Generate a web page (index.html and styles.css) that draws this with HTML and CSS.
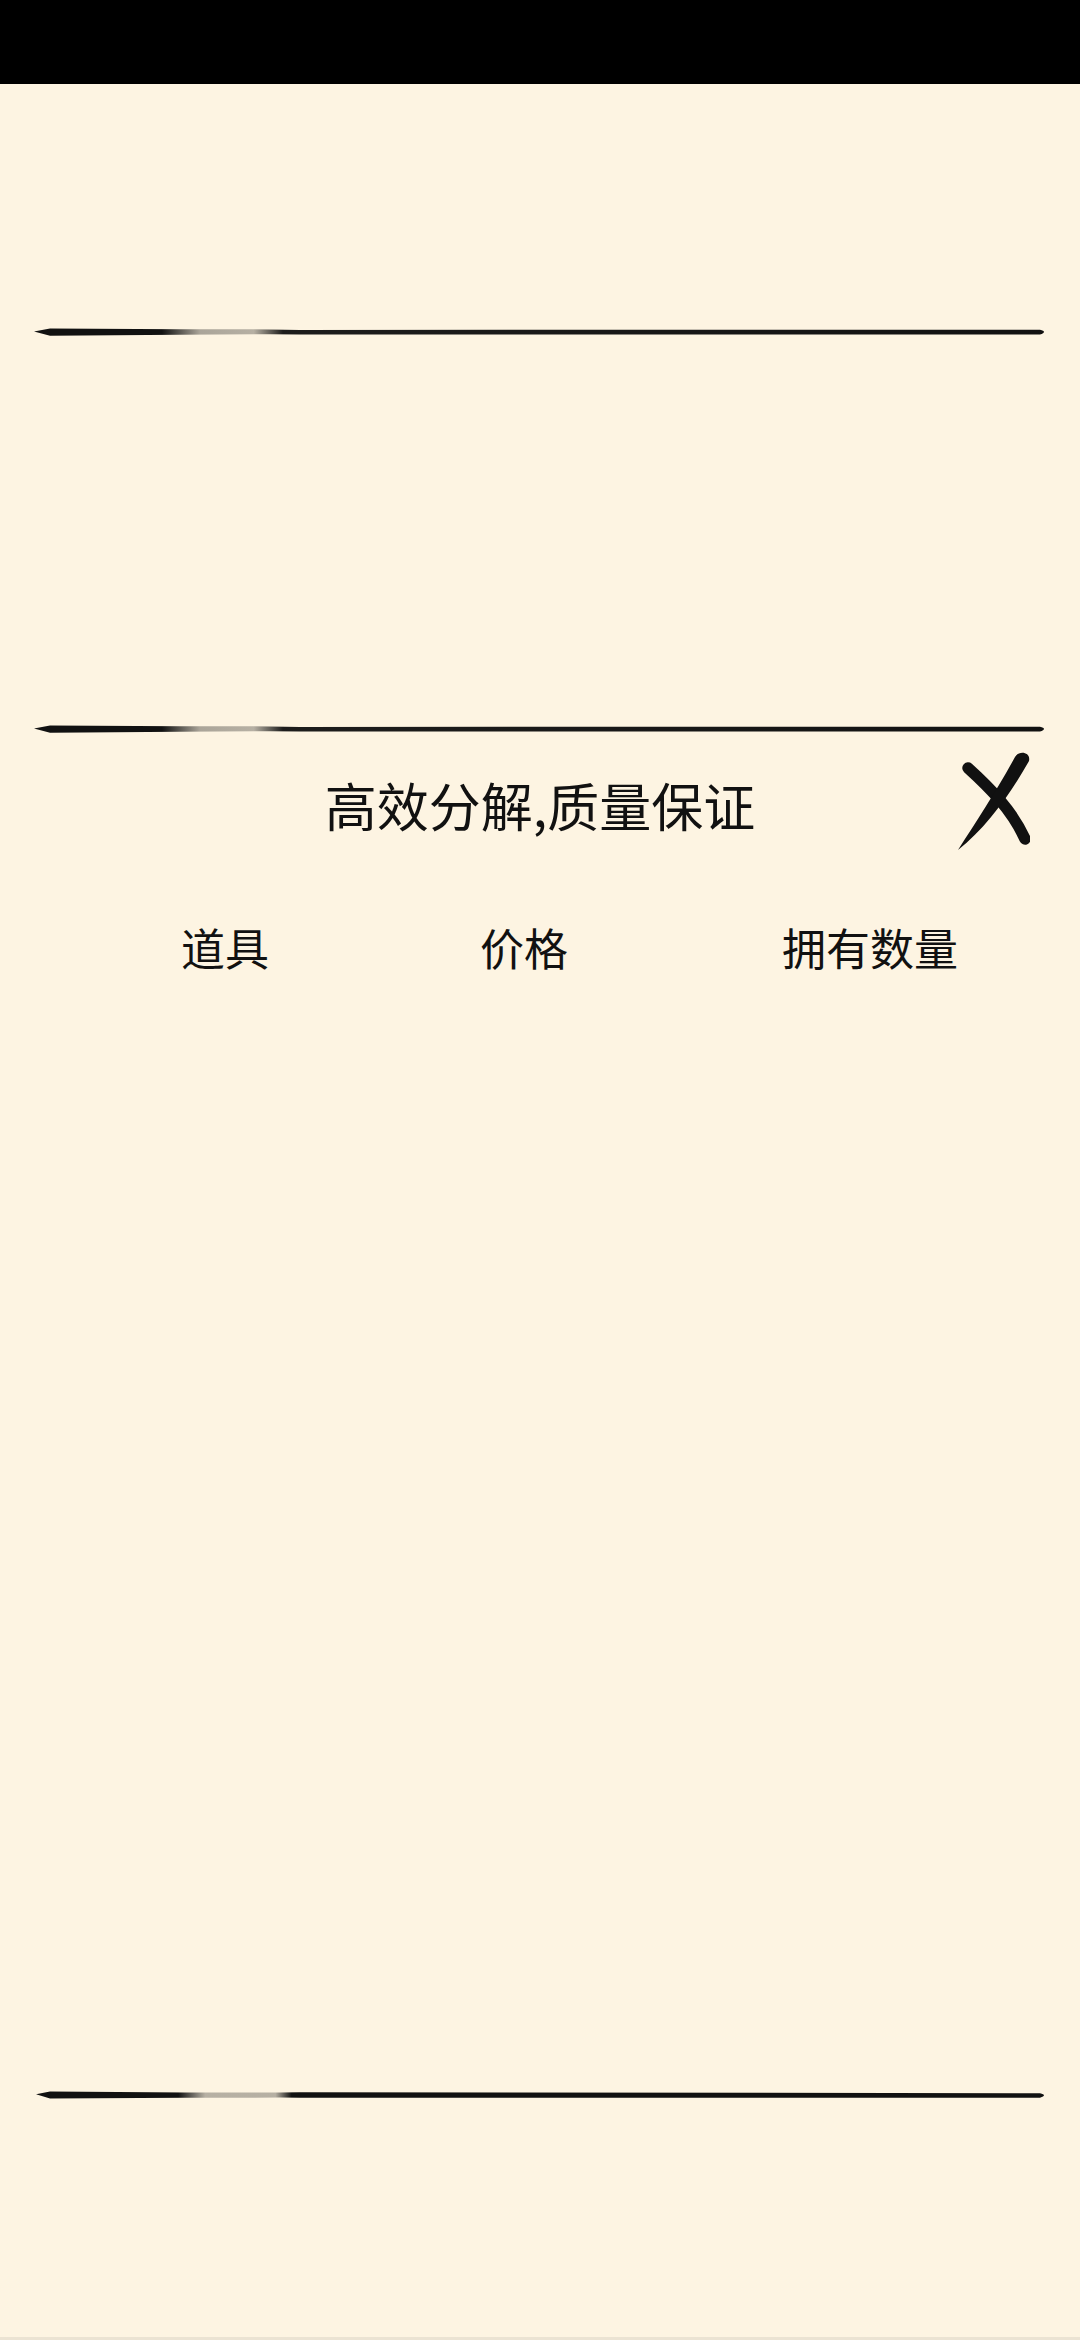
FILE: index.html
```html
<!DOCTYPE html>
<html lang="zh-CN">
<head>
<meta charset="utf-8">
<title>高效分解</title>
<link rel="stylesheet" href="styles.css">
</head>
<body>
<div class="page">
  <div class="status"></div>
  <div class="top-space"></div>
  <svg class="rule" viewBox="0 0 1080 12" width="1080" height="12">
    <defs>
      <linearGradient id="g1" gradientUnits="userSpaceOnUse" x1="0" y1="0" x2="1080" y2="0">
        <stop offset="0" stop-color="#111" stop-opacity="1"/>
        <stop offset="0.15" stop-color="#111" stop-opacity="1"/>
        <stop offset="0.185" stop-color="#111" stop-opacity="0.35"/>
        <stop offset="0.235" stop-color="#111" stop-opacity="0.3"/>
        <stop offset="0.262" stop-color="#111" stop-opacity="0.95"/>
        <stop offset="1" stop-color="#111" stop-opacity="1"/>
      </linearGradient>
    </defs>
    <path fill="url(#g1)" d="M34,5.5 L50,2.4 L180,3.2 L270,3.4 L300,3.9 L1040,3.8 Q1048,5.8 1040,8.6 L300,8.4 L270,8.2 L180,8.8 L50,9.8 Z"/>
  </svg>
  <div class="box-space"></div>
  <svg class="rule" viewBox="0 0 1080 12" width="1080" height="12">
    <defs>
      <linearGradient id="g2" gradientUnits="userSpaceOnUse" x1="0" y1="0" x2="1080" y2="0">
        <stop offset="0" stop-color="#111" stop-opacity="1"/>
        <stop offset="0.15" stop-color="#111" stop-opacity="1"/>
        <stop offset="0.185" stop-color="#111" stop-opacity="0.35"/>
        <stop offset="0.235" stop-color="#111" stop-opacity="0.3"/>
        <stop offset="0.262" stop-color="#111" stop-opacity="0.95"/>
        <stop offset="1" stop-color="#111" stop-opacity="1"/>
      </linearGradient>
    </defs>
    <path fill="url(#g2)" d="M34,5.5 L50,2.4 L180,3.2 L270,3.4 L300,3.9 L1040,3.8 Q1048,5.8 1040,8.6 L300,8.4 L270,8.2 L180,8.8 L50,9.8 Z"/>
  </svg>
  <div class="title-row">
    <div></div>
    <h1 class="title">高效分解,质量保证</h1>
    <button class="close" aria-label="关闭">
      <svg viewBox="0 0 80 110" width="80" height="110">
        <path d="M18,22 C40,42 62,64 75,93" fill="none" stroke="#111" stroke-width="11.5" stroke-linecap="round"/>
        <path d="M65,11 C69,4 81,6 79,15 C61,47 37,81 8,104 C26,76 47,44 65,11 Z" fill="#111"/>
      </svg>
    </button>
  </div>
  <div class="cols">
    <div class="col">道具</div>
    <div class="col">价格</div>
    <div class="col">拥有数量</div>
  </div>
  <div class="list"></div>
  <svg class="rule" viewBox="0 0 1080 12" width="1080" height="12">
    <defs>
      <linearGradient id="g3" gradientUnits="userSpaceOnUse" x1="0" y1="0" x2="1080" y2="0">
        <stop offset="0" stop-color="#111" stop-opacity="1"/>
        <stop offset="0.165" stop-color="#111" stop-opacity="1"/>
        <stop offset="0.19" stop-color="#111" stop-opacity="0.3"/>
        <stop offset="0.255" stop-color="#111" stop-opacity="0.3"/>
        <stop offset="0.27" stop-color="#111" stop-opacity="1"/>
        <stop offset="1" stop-color="#111" stop-opacity="1"/>
      </linearGradient>
    </defs>
    <path fill="url(#g3)" d="M36,5.2 L50,2.6 L185,3.4 L280,3.6 L300,3.2 L1040,4.2 Q1048,6 1040,8.8 L300,8.8 L280,8.6 L185,8.8 L50,9.6 Z"/>
  </svg>
  <div class="bottom-space"></div>
</div>
</body>
</html>
```

FILE: styles.css
```css
html, body {
  margin: 0;
  padding: 0;
  background: #fdf4e2;
}
.page {
  width: 1080px;
  height: 2340px;
  display: flex;
  flex-direction: column;
  background: #fdf4e2;
  font-family: "Noto Sans CJK SC", "Noto Sans", sans-serif;
  color: #111;
  box-sizing: border-box;
  border-bottom: 3px solid #ebe3d3;
}
.status {
  height: 84px;
  background: #000;
  flex: none;
}
.top-space {
  height: 242px;
  flex: none;
}
.rule {
  display: block;
  flex: none;
}
.box-space {
  height: 385px;
  flex: none;
}
.title-row {
  height: 140px;
  flex: none;
  display: grid;
  grid-template-columns: 1fr auto 1fr;
  align-items: center;
}
.title {
  margin: 0;
  font-size: 52px;
  font-weight: 400;
  line-height: 1;
  letter-spacing: 0;
}
.close {
  justify-self: end;
  margin-right: 50px;
  margin-top: -8px;
  padding: 0;
  border: 0;
  background: transparent;
  width: 80px;
  height: 110px;
}
.close svg {
  display: block;
}
.cols {
  height: 144px;
  flex: none;
  display: grid;
  grid-template-columns: 300px 298px 394px;
  padding-left: 75px;
  align-items: center;
}
.col {
  text-align: center;
  font-size: 44px;
  line-height: 1;
}
.list {
  height: 1070px;
  flex: none;
}
.bottom-space {
  flex: 1;
}
```
